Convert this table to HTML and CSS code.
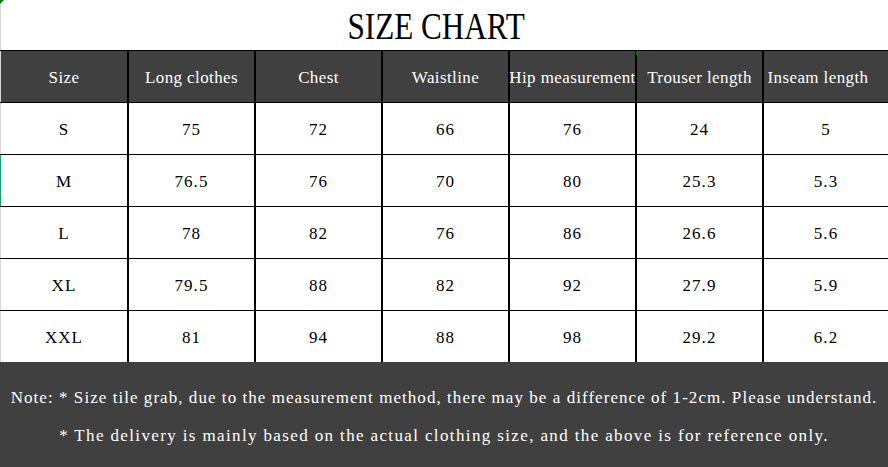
FILE: index.html
```html
<!DOCTYPE html>
<html lang="en">
<head>
<meta charset="utf-8">
<title>Size Chart</title>
<link rel="stylesheet" href="styles.css">
</head>
<body>
<div class="page">
  <span class="corner-mark"></span>
  <h1 class="title"><span class="title-text">SIZE CHART</span></h1>
  <div class="chart">
    <div class="row head">
      <div class="cell"><span class="t">Size</span></div>
      <div class="cell"><span class="t">Long clothes</span></div>
      <div class="cell"><span class="t">Chest</span></div>
      <div class="cell"><span class="t">Waistline</span></div>
      <div class="cell"><span class="t">Hip measurement</span></div>
      <div class="cell marked"><span class="t">Trouser length</span></div>
      <div class="cell shift"><span class="t">Inseam length</span></div>
    </div>
    <div class="row">
      <div class="cell"><span class="t">S</span></div>
      <div class="cell"><span class="t">75</span></div>
      <div class="cell"><span class="t">72</span></div>
      <div class="cell"><span class="t">66</span></div>
      <div class="cell"><span class="t">76</span></div>
      <div class="cell"><span class="t">24</span></div>
      <div class="cell"><span class="t">5</span></div>
    </div>
    <div class="row">
      <div class="cell selected"><span class="t">M</span></div>
      <div class="cell"><span class="t">76.5</span></div>
      <div class="cell"><span class="t">76</span></div>
      <div class="cell"><span class="t">70</span></div>
      <div class="cell"><span class="t">80</span></div>
      <div class="cell"><span class="t">25.3</span></div>
      <div class="cell"><span class="t">5.3</span></div>
    </div>
    <div class="row">
      <div class="cell"><span class="t">L</span></div>
      <div class="cell"><span class="t">78</span></div>
      <div class="cell"><span class="t">82</span></div>
      <div class="cell"><span class="t">76</span></div>
      <div class="cell"><span class="t">86</span></div>
      <div class="cell"><span class="t">26.6</span></div>
      <div class="cell"><span class="t">5.6</span></div>
    </div>
    <div class="row">
      <div class="cell"><span class="t">XL</span></div>
      <div class="cell"><span class="t">79.5</span></div>
      <div class="cell"><span class="t">88</span></div>
      <div class="cell"><span class="t">82</span></div>
      <div class="cell"><span class="t">92</span></div>
      <div class="cell"><span class="t">27.9</span></div>
      <div class="cell"><span class="t">5.9</span></div>
    </div>
    <div class="row last">
      <div class="cell"><span class="t">XXL</span></div>
      <div class="cell"><span class="t">81</span></div>
      <div class="cell"><span class="t">94</span></div>
      <div class="cell"><span class="t">88</span></div>
      <div class="cell"><span class="t">98</span></div>
      <div class="cell"><span class="t">29.2</span></div>
      <div class="cell"><span class="t">6.2</span></div>
    </div>
  </div>
  <div class="note">
    <p class="line"><span class="t">Note: * Size tile grab, due to the measurement method, there may be a difference of 1-2cm. Please understand.</span></p>
    <p class="line"><span class="t wide">* The delivery is mainly based on the actual clothing size, and the above is for reference only.</span></p>
  </div>
</div>
</body>
</html>
```

FILE: styles.css
```css
html, body {
  margin: 0;
  padding: 0;
  background: #ffffff;
  overflow: hidden;
}

.page {
  position: relative;
  width: 888px;
  height: 467px;
  overflow: hidden;
  font-family: "Liberation Serif", "DejaVu Serif", serif;
  color: #000;
}

.corner-mark {
  position: absolute;
  top: 0;
  left: 0;
  width: 0;
  height: 0;
  border-top: 4px solid #11780f;
  border-right: 4px solid transparent;
  z-index: 2;
}

.title {
  margin: 0;
  height: 50px;
  box-sizing: border-box;
  padding: 3px 17px 0 0;
  line-height: 47px;
  text-align: center;
  font-family: "Liberation Serif", "DejaVu Serif", serif;
  font-weight: normal;
  font-size: 38px;
  border-left: 1px solid #d6d6d6;
}

.title-text {
  display: inline-block;
  transform: scaleX(0.82);
  white-space: nowrap;
}

.chart {
  border-top: 1px solid #000;
}

.row {
  display: grid;
  grid-template-columns: 127px 127px 127px 127px 127px 127px 126px;
  height: 52px;
  box-sizing: border-box;
  border-bottom: 1px solid #000;
}

.row.last {
  height: 51px;
  border-bottom: none;
}

.row.head {
  background: #404040;
  color: #ffffff;
}

.cell {
  display: flex;
  align-items: center;
  justify-content: center;
  box-sizing: border-box;
  padding-top: 2px;
  border-left: 2px solid #000;
  min-width: 0;
}

.cell:first-child {
  border-left: 1px solid #d6d6d6;
}

.cell.selected {
  border-left-color: #1d9d6b;
}

.cell.shift {
  padding-right: 16px;
}

.cell.marked {
  position: relative;
}

.cell.marked::before {
  content: "";
  position: absolute;
  top: 0;
  left: -1px;
  width: 0;
  height: 0;
  border-top: 5px solid #11780f;
  border-right: 5px solid transparent;
}

.t {
  display: inline-block;
  font-size: 17px;
  line-height: 20px;
  letter-spacing: 1.05px;
  white-space: nowrap;
}

.head .t {
  letter-spacing: 0.4px;
}

.t.wide {
  letter-spacing: 1.37px;
}

.note {
  height: 105px;
  box-sizing: border-box;
  padding-top: 17px;
  background: #404040;
  color: #ffffff;
}

.line {
  margin: 0;
  height: 38px;
  display: flex;
  align-items: center;
  justify-content: center;
}
```
